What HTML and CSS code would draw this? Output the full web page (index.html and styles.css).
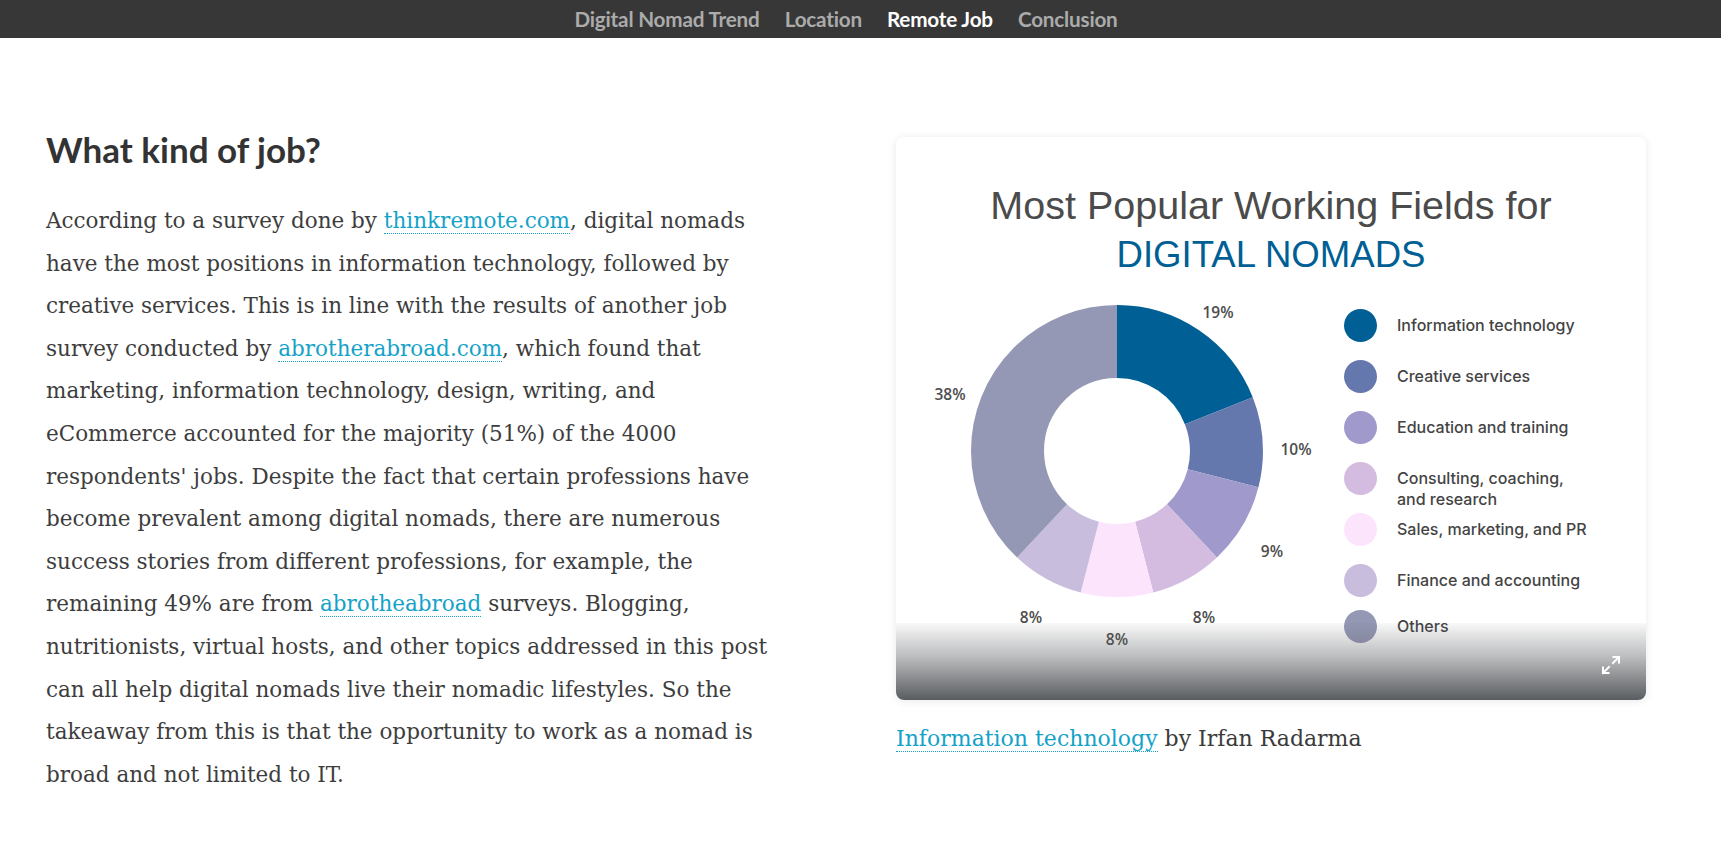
FILE: index.html
```html
<!DOCTYPE html>
<html lang="en">
<head>
<meta charset="utf-8">
<title>What kind of job?</title>
<link rel="stylesheet" href="styles.css">
</head>
<body>
<nav class="topnav">
  <div class="topnav-inner">
    <a class="nav-link" href="#trend">Digital Nomad Trend</a>
    <a class="nav-link" href="#location">Location</a>
    <a class="nav-link active" href="#remote">Remote Job</a>
    <a class="nav-link" href="#conclusion">Conclusion</a>
  </div>
</nav>

<main class="section">
  <div class="col-text">
    <h2 class="heading">What kind of job?</h2>
    <p class="body-text">According to a survey done by <a class="link" href="#">thinkremote.com</a>, digital nomads have the most positions in information technology, followed by creative services. This is in line with the results of another job survey conducted by <a class="link" href="#">abrotherabroad.com</a>, which found that marketing, information technology, design, writing, and eCommerce accounted for the majority (51%) of the 4000 respondents' jobs. Despite the fact that certain professions have become prevalent among digital nomads, there are numerous success stories from different professions, for example, the remaining 49% are from <a class="link" href="#">abrotheabroad</a> surveys. Blogging, nutritionists, virtual hosts, and other topics addressed in this post can all help digital nomads live their nomadic lifestyles. So the takeaway from this is that the opportunity to work as a nomad is broad and not limited to IT.</p>
  </div>

  <figure class="col-figure">
    <div class="card">
      <div class="chart-title">
        <div class="title-line">Most Popular Working Fields for</div>
        <div class="title-accent">DIGITAL NOMADS</div>
      </div>
      <div class="chart-row">
        <svg class="donut" width="448" height="370" viewBox="0 0 448 370">
          <g transform="rotate(-90 221 154)">
            <circle cx="221" cy="154" r="109.5" fill="none" stroke="#005f94" stroke-width="73" pathLength="100" stroke-dasharray="19 81" stroke-dashoffset="0"/>
            <circle cx="221" cy="154" r="109.5" fill="none" stroke="#6478ad" stroke-width="73" pathLength="100" stroke-dasharray="10 90" stroke-dashoffset="-19"/>
            <circle cx="221" cy="154" r="109.5" fill="none" stroke="#9f9acb" stroke-width="73" pathLength="100" stroke-dasharray="9 91" stroke-dashoffset="-29"/>
            <circle cx="221" cy="154" r="109.5" fill="none" stroke="#d3bce0" stroke-width="73" pathLength="100" stroke-dasharray="8 92" stroke-dashoffset="-38"/>
            <circle cx="221" cy="154" r="109.5" fill="none" stroke="#fde4fd" stroke-width="73" pathLength="100" stroke-dasharray="8 92" stroke-dashoffset="-46"/>
            <circle cx="221" cy="154" r="109.5" fill="none" stroke="#c9bddd" stroke-width="73" pathLength="100" stroke-dasharray="8 92" stroke-dashoffset="-54"/>
            <circle cx="221" cy="154" r="109.5" fill="none" stroke="#9598b5" stroke-width="73" pathLength="100" stroke-dasharray="38 62" stroke-dashoffset="-62"/>
          </g>
          <g class="pct">
            <text x="322" y="21">19%</text>
            <text x="400" y="158">10%</text>
            <text x="376" y="260">9%</text>
            <text x="308" y="326">8%</text>
            <text x="221" y="348">8%</text>
            <text x="135" y="326">8%</text>
            <text x="54" y="103">38%</text>
          </g>
        </svg>
        <ul class="legend">
          <li class="legend-item"><span class="dot" style="background:#005f94"></span><span class="legend-label">Information technology</span></li>
          <li class="legend-item"><span class="dot" style="background:#6478ad"></span><span class="legend-label">Creative services</span></li>
          <li class="legend-item"><span class="dot" style="background:#9f9acb"></span><span class="legend-label">Education and training</span></li>
          <li class="legend-item"><span class="dot" style="background:#d3bce0"></span><span class="legend-label">Consulting, coaching,<br>and research</span></li>
          <li class="legend-item"><span class="dot" style="background:#fde4fd"></span><span class="legend-label">Sales, marketing, and PR</span></li>
          <li class="legend-item"><span class="dot" style="background:#c9bddd"></span><span class="legend-label">Finance and accounting</span></li>
          <li class="legend-item legend-item-last"><span class="dot" style="background:#9598b5"></span><span class="legend-label">Others</span></li>
        </ul>
      </div>
      <div class="card-fade"></div>
      <button class="expand" aria-label="Expand">
        <svg width="20" height="20" viewBox="0 0 20 20" fill="none" stroke="#fff" stroke-width="2" stroke-linecap="square">
          <path d="M12 8 L18 2 M12.5 2 H18 V7.5"/>
          <path d="M8 12 L2 18 M2 12.5 V18 H7.5"/>
        </svg>
      </button>
    </div>
    <figcaption class="caption"><a class="link" href="#">Information technology</a> by Irfan Radarma</figcaption>
  </figure>
</main>
</body>
</html>
```

FILE: styles.css
```css
* { box-sizing: border-box; }

html, body {
  margin: 0;
  padding: 0;
  background: #fff;
}

body {
  font-family: "DejaVu Serif", serif;
  color: #3b3b3b;
}

.topnav {
  background: #373737;
  height: 38px;
}

.topnav-inner {
  width: 1600px;
  margin-left: 46px;
  height: 100%;
  display: flex;
  justify-content: center;
  align-items: center;
  gap: 25px;
}

.nav-link {
  font-family: Lato, "Liberation Sans", sans-serif;
  font-weight: 700;
  font-size: 20.7px;
  color: #ababab;
  text-decoration: none;
  letter-spacing: -0.2px;
}

.nav-link.active {
  color: #fff;
}

.section {
  width: 1600px;
  margin-left: 46px;
  padding-top: 99px;
  display: grid;
  grid-template-columns: 750px 750px;
  column-gap: 100px;
  align-items: start;
}

.heading {
  font-family: Lato, "Liberation Sans", sans-serif;
  font-weight: 700;
  font-size: 35px;
  line-height: 42px;
  color: #333;
  margin: -9px 0 0;
}

.body-text {
  font-size: 21.5px;
  line-height: 42.6px;
  margin: 30px 0 0;
  max-width: 735px;
  color: #3d3d3d;
}

.link {
  color: #15a2c8;
  text-decoration: none;
  border-bottom: 1px dotted #15a2c8;
}

.col-figure {
  margin: 0;
}

.card {
  position: relative;
  width: 750px;
  height: 563px;
  background: #fff;
  border-radius: 8px;
  box-shadow: 0 1px 10px rgba(0, 0, 0, 0.09);
  overflow: hidden;
}

.chart-title {
  padding-top: 44px;
  text-align: center;
  font-family: "Liberation Sans", Arial, sans-serif;
  line-height: 49px;
}

.title-line {
  font-size: 39.5px;
  color: #4b4b4b;
}

.title-accent {
  font-size: 36.6px;
  color: #005f94;
}

.chart-row {
  display: flex;
  margin-top: 18px;
}

.donut {
  flex: none;
  display: block;
}

.pct text {
  font-family: "Open Sans", sans-serif;
  font-weight: 600;
  font-size: 15.5px;
  fill: #4d4d4d;
  text-anchor: middle;
}

.legend {
  list-style: none;
  margin: 0;
  padding: 11.5px 0 0;
  display: flex;
  flex-direction: column;
  gap: 18px;
}

.legend-item {
  display: flex;
  align-items: flex-start;
  gap: 20px;
  height: 33px;
}

.legend-item-last {
  margin-top: -5px;
}

.dot {
  flex: none;
  width: 33px;
  height: 33px;
  border-radius: 50%;
}

.legend-label {
  font-family: Inter, "Noto Sans", sans-serif;
  font-weight: 500;
  font-size: 16px;
  line-height: 21px;
  padding-top: 6px;
  color: #444;
  white-space: nowrap;
}

.card-fade {
  position: absolute;
  left: 0;
  right: 0;
  bottom: 0;
  height: 77px;
  background: linear-gradient(to bottom, rgba(89, 92, 96, 0.04) 0%, rgba(89, 92, 96, 0.42) 45%, rgba(89, 92, 96, 1) 100%);
}

.expand {
  position: absolute;
  right: 25px;
  bottom: 25px;
  width: 20px;
  height: 20px;
  padding: 0;
  border: 0;
  background: none;
}

.expand svg {
  display: block;
}

.caption {
  margin-top: 23px;
  font-size: 22px;
  line-height: 32px;
  color: #3b3b3b;
}
```
